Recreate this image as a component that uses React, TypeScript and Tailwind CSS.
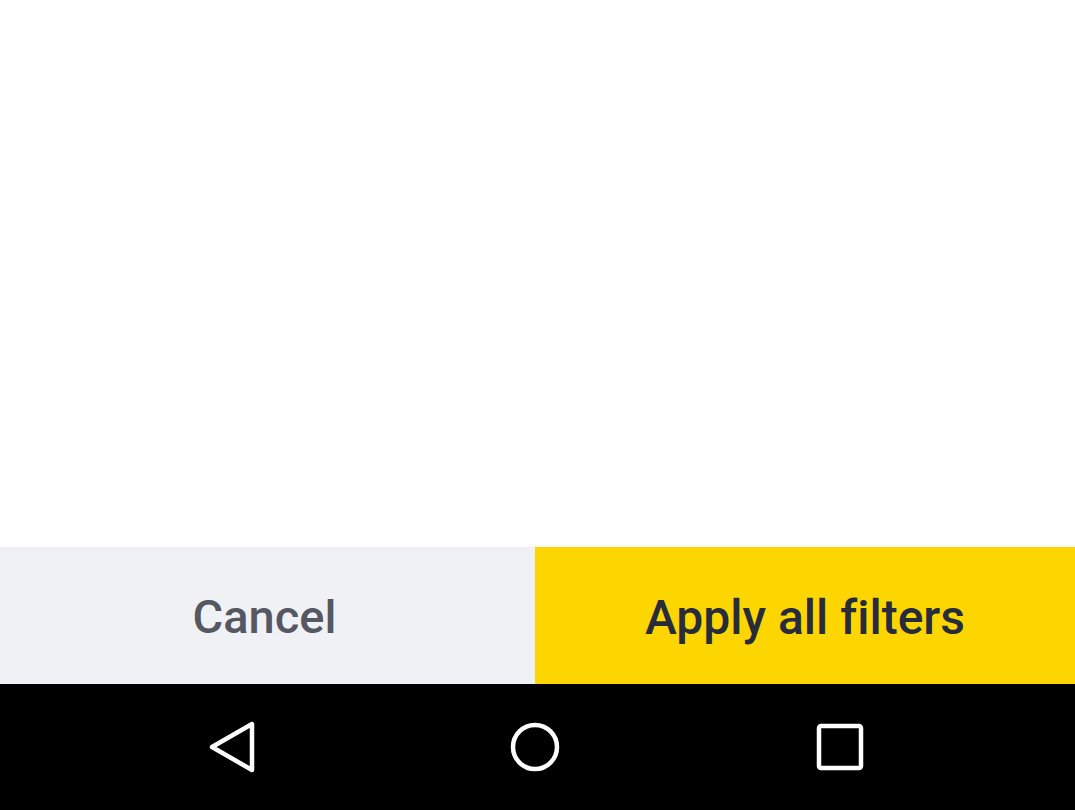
export default function App() {
  return (
    <div className="flex h-[810px] w-[1075px] flex-col bg-white font-['Roboto',sans-serif] [font-variant-ligatures:none]">
      <div className="flex-1 bg-[#fefefe]" />
      <div className="flex h-[137px]">
        <button
          type="button"
          className="flex w-[535px] items-center justify-center bg-[#f0f1f4] pt-[4px] pr-[6px] text-[47px] font-medium text-[#555862]"
        >
          Cancel
        </button>
        <button
          type="button"
          className="flex flex-1 items-center justify-center bg-[#fdd600] pt-[4px] text-[48px] font-medium text-[#282b3c]"
        >
          Apply all filters
        </button>
      </div>
      <div className="flex h-[126px] items-center justify-between bg-black pl-[206px] pr-[211px]">
        <svg width="52" height="52" viewBox="0 0 52 52" fill="none" stroke="white" strokeWidth="4.5" strokeLinejoin="round">
          <path d="M46 3 L46 49 L6 26 Z" />
        </svg>
        <svg width="52" height="52" viewBox="0 0 52 52" fill="none" stroke="white" strokeWidth="4.5" className="-ml-[4px]">
          <circle cx="26" cy="26" r="22" />
        </svg>
        <svg width="48" height="48" viewBox="0 0 48 48" fill="none" stroke="white" strokeWidth="4.5" strokeLinejoin="round">
          <rect x="3" y="3" width="42" height="42" rx="2" />
        </svg>
      </div>
    </div>
  );
}
